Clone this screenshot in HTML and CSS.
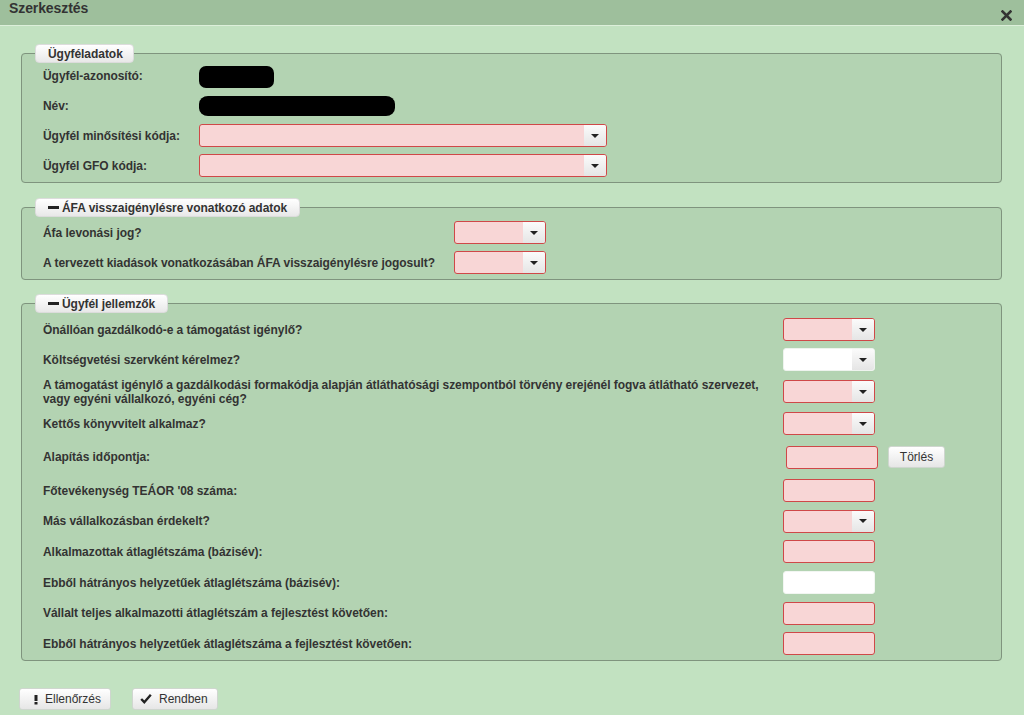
FILE: index.html
```html
<!DOCTYPE html>
<html lang="hu">
<head>
<meta charset="utf-8">
<title>Szerkesztés</title>
<link rel="stylesheet" href="styles.css">
</head>
<body>
<div class="dialog">
  <div class="titlebar">
    <span class="title">Szerkesztés</span>
    <svg class="close" width="11" height="11" viewBox="0 0 11 11"><path d="M1.5 1.5 L9.5 9.5 M9.5 1.5 L1.5 9.5" stroke="#333" stroke-width="2.6" stroke-linecap="square"/></svg>
  </div>
  <div class="content">
    <fieldset class="fs fs1">
      <legend class="legend">Ügyféladatok</legend>
      <div class="rows">
        <div class="row"><span class="label l1">Ügyfél-azonosító:</span><span class="blob b1"></span></div>
        <div class="row"><span class="label l1">Név:</span><span class="blob b2"></span></div>
        <div class="row"><span class="label l1">Ügyfél minősítési kódja:</span><div class="sel wide"><span class="dd"><i class="caret"></i></span></div></div>
        <div class="row"><span class="label l1">Ügyfél GFO kódja:</span><div class="sel wide"><span class="dd"><i class="caret"></i></span></div></div>
      </div>
    </fieldset>

    <fieldset class="fs fs2">
      <legend class="legend"><span class="minus"></span>ÁFA visszaigénylésre vonatkozó adatok</legend>
      <div class="rows">
        <div class="row"><span class="label l2">Áfa levonási jog?</span><div class="sel"><span class="dd"><i class="caret"></i></span></div></div>
        <div class="row"><span class="label l2">A tervezett kiadások vonatkozásában ÁFA visszaigénylésre jogosult?</span><div class="sel"><span class="dd"><i class="caret"></i></span></div></div>
      </div>
    </fieldset>

    <fieldset class="fs fs3">
      <legend class="legend"><span class="minus"></span>Ügyfél jellemzők</legend>
      <div class="rows">
        <div class="row"><span class="label l3">Önállóan gazdálkodó-e a támogatást igénylő?</span><div class="sel"><span class="dd"><i class="caret"></i></span></div></div>
        <div class="row"><span class="label l3">Költségvetési szervként kérelmez?</span><div class="sel ok"><span class="dd"><i class="caret"></i></span></div></div>
        <div class="row two"><span class="label l3">A támogatást igénylő a gazdálkodási formakódja alapján átláthatósági szempontból törvény erejénél fogva átlátható szervezet,<br>vagy egyéni vállalkozó, egyéni cég?</span><div class="sel"><span class="dd"><i class="caret"></i></span></div></div>
        <div class="row"><span class="label l3">Kettős könyvvitelt alkalmaz?</span><div class="sel"><span class="dd"><i class="caret"></i></span></div></div>
        <div class="row date"><span class="label l3">Alapítás időpontja:</span><div class="inp dateinp"></div><button class="btn torles">Törlés</button></div>
        <div class="row t"><span class="label l3">Főtevékenység TEÁOR '08 száma:</span><div class="inp"></div></div>
        <div class="row t"><span class="label l3">Más vállalkozásban érdekelt?</span><div class="sel"><span class="dd"><i class="caret"></i></span></div></div>
        <div class="row t"><span class="label l3">Alkalmazottak átlaglétszáma (bázisév):</span><div class="inp"></div></div>
        <div class="row t"><span class="label l3">Ebből hátrányos helyzetűek átlaglétszáma (bázisév):</span><div class="inp ok"></div></div>
        <div class="row t"><span class="label l3">Vállalt teljes alkalmazotti átlaglétszám a fejlesztést követően:</span><div class="inp"></div></div>
        <div class="row t"><span class="label l3">Ebből hátrányos helyzetűek átlaglétszáma a fejlesztést követően:</span><div class="inp"></div></div>
      </div>
    </fieldset>

    <div class="actions">
      <button class="btn act check"><svg width="6" height="12" viewBox="0 0 6 12"><rect x="1.5" y="2" width="3" height="6" fill="#222"/><rect x="1.5" y="9" width="3" height="2.5" fill="#222"/></svg><span>Ellenőrzés</span></button>
      <button class="btn act ok"><svg width="12" height="11" viewBox="0 0 12 11"><path d="M1.2 6 L4.3 9.2 L10.8 1.8" fill="none" stroke="#222" stroke-width="2.4"/></svg><span>Rendben</span></button>
    </div>
  </div>
</div>
</body>
</html>
```

FILE: styles.css
```css
* { box-sizing: border-box; }
html, body { margin: 0; padding: 0; }
body {
  background: #c2e2c1;
  font-family: "Liberation Sans", Arial, sans-serif;
  font-size: 12px;
  color: #333;
  width: 1024px;
  height: 715px;
  overflow: hidden;
}
.titlebar {
  height: 26px;
  background: #9ebf9c;
  border-bottom: 1px solid #dcefda;
  display: flex;
  align-items: flex-start;
  justify-content: space-between;
  padding: 0 12px 0 9px;
}
.title {
  font-weight: bold;
  font-size: 14px;
  line-height: 17px;
  letter-spacing: -0.1px;
  color: #333;
}
.close { margin-top: 10px; }
.content { padding: 18px 22px 0 21px; }
.fs {
  margin: 0 0 15px 0;
  padding: 0;
  border: 1px solid #7f947e;
  border-radius: 4px;
  background: #b3d3b2;
  min-width: 0;
}
.fs2 { margin-bottom: 14px; }
.legend {
  margin-left: 13px;
  height: 19px;
  padding: 0 10px 0 12px;
  line-height: 18px;
  font-weight: bold;
  font-size: 12px;
  letter-spacing: -0.05px;
  color: #333;
  background: linear-gradient(#ffffff, #e8e8e8);
  border: 1px solid #dcdcdc;
  border-radius: 4px;
  display: flex;
  align-items: center;
}
.fs2 .legend, .fs3 .legend { padding-right: 12px; }
.minus {
  display: inline-block;
  width: 11px;
  height: 3px;
  background: #222;
  margin-right: 3px;
}
.rows {
  display: flex;
  flex-direction: column;
  gap: 7px;
  padding-left: 21px;
}
.fs1 .rows { padding-top: 1px; padding-bottom: 5px; }
.fs2 .rows { padding-top: 4px; padding-bottom: 5px; }
.fs3 .rows { padding-top: 5px; padding-bottom: 4px; }
.row {
  display: flex;
  align-items: center;
  height: 23px;
}
.row.two { height: 27px; }
.row.date { height: 30px; }
.row.t { height: 23.6px; }
.label {
  flex: none;
  font-weight: bold;
  letter-spacing: -0.05px;
  line-height: 14px;
  color: #333;
}
.l1 { width: 156px; }
.l2 { width: 411px; }
.l3 { width: 740px; }
.blob { display: block; background: #000; }
.b1 { width: 75px; height: 22px; border-radius: 7px; margin-top: 2px; }
.b2 { width: 196px; height: 20px; border-radius: 9px / 8px; margin-top: 1px; }
.sel {
  width: 92px;
  height: 23px;
  border: 1px solid #cf4848;
  border-radius: 3px;
  background: #f8d6d6;
  display: flex;
  justify-content: flex-end;
  overflow: hidden;
}
.sel.wide { width: 408px; }
.sel.ok { background: #fff; border-color: #eef3ee; }
.dd {
  width: 22px;
  height: 100%;
  background: linear-gradient(#fbfbfb, #e5e5e5);
  display: flex;
  align-items: center;
  justify-content: center;
}
.caret {
  width: 0;
  height: 0;
  border-left: 4px solid transparent;
  border-right: 4px solid transparent;
  border-top: 4px solid #222;
}
.inp {
  width: 92px;
  height: 23px;
  border: 1px solid #cf4848;
  border-radius: 3px;
  background: #f8d6d6;
}
.inp.ok { background: #fff; border-color: #f2f6f2; }
.dateinp { margin-left: 3px; }
.btn {
  font-family: "Liberation Sans", Arial, sans-serif;
  font-size: 12px;
  color: #333;
  height: 22px;
  border: 1px solid #cfd6cf;
  border-radius: 3px;
  background: linear-gradient(#ffffff, #e6e6e6);
  padding: 0;
  display: flex;
  align-items: center;
  justify-content: center;
}
.torles { width: 57px; margin-left: 10px; }
.actions {
  display: flex;
  gap: 21px;
  margin-top: 27px;
  margin-left: -2px;
}
.act { justify-content: flex-start; gap: 0; }
.act.check { width: 92px; padding-left: 13px; }
.act.check svg { margin-right: 6px; }
.act.ok { width: 86px; padding-left: 7px; }
.act.ok svg { margin-right: 7px; }
```
